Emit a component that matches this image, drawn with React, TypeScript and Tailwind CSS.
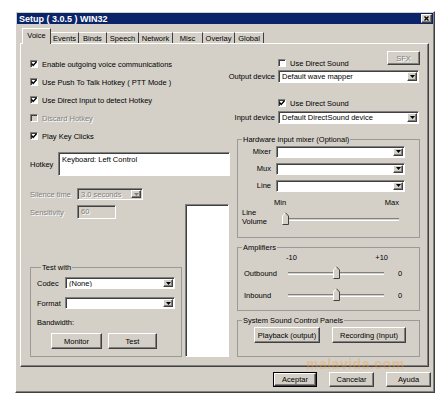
import type { ReactNode } from "react";

const raised =
  "border border-t-white border-l-white border-r-[#404040] border-b-[#404040] shadow-[inset_-1px_-1px_0_#808080]";
const sunken =
  "border border-t-[#808080] border-l-[#808080] border-r-white border-b-white shadow-[inset_1px_1px_0_#404040]";
const grayText = "text-[#808080] [text-shadow:1px_1px_0_#fff]";

function Check({ label, checked = false, disabled = false }: { label: string; checked?: boolean; disabled?: boolean }) {
  return (
    <div className="flex items-center gap-[4px] h-[10px]">
      <span
        className={`w-[8px] h-[8px] shrink-0 flex items-center justify-center ${sunken} ${
          disabled ? "bg-[#d4d0c8]" : "bg-white"
        }`}
      >
        {checked && (
          <svg width="6" height="6" viewBox="0 0 6 6">
            <path d="M0.5 2.5 L2.2 4.5 L5.5 0.8" stroke="#000" strokeWidth="1.4" fill="none" />
          </svg>
        )}
      </span>
      <span className={disabled ? grayText : ""}>{label}</span>
    </div>
  );
}

function Arrow({ disabled = false }: { disabled?: boolean }) {
  return (
    <span className={`w-[10px] shrink-0 bg-[#d4d0c8] flex items-center justify-center ${raised}`}>
      <svg width="5" height="3" viewBox="0 0 5 3">
        <path d="M0 0 H5 L2.5 3 Z" fill={disabled ? "#808080" : "#000"} />
      </svg>
    </span>
  );
}

function Combo({ w, value = "", disabled = false, h = "h-[12px]" }: { w: string; value?: string; disabled?: boolean; h?: string }) {
  return (
    <div className={`${w} ${h} ${sunken} flex items-stretch p-[1px] ${disabled ? "bg-[#d4d0c8]" : "bg-white"}`}>
      <span className={`flex-1 flex items-center px-[2px] whitespace-nowrap overflow-hidden ${disabled ? grayText : ""}`}>
        {value}
      </span>
      <Arrow disabled={disabled} />
    </div>
  );
}

function Btn({ children, w, h = "h-[15px]", def = false, disabled = false }: { children: ReactNode; w: string; h?: string; def?: boolean; disabled?: boolean }) {
  return (
    <div className={`${w} ${h} ${def ? "border border-black" : ""} shrink-0`}>
      <div className={`w-full h-full bg-[#d4d0c8] flex items-center justify-center whitespace-nowrap ${raised} ${disabled ? grayText : ""}`}>
        {children}
      </div>
    </div>
  );
}

function Slider({ w, thumb }: { w: string; thumb: string }) {
  return (
    <div className={`relative h-[14px] ${w}`}>
      <div className="absolute left-0 right-0 top-[6px] h-[3px] border-t border-t-[#808080] border-b border-b-white bg-[#d4d0c8]" />
      <svg className={`absolute top-0 ${thumb}`} width="7" height="13" viewBox="0 0 7 13">
        <path d="M0.5 12.5 V4 L3.5 0.7 L6.5 4 V12.5 Z" fill="#d4d0c8" />
        <path d="M0.5 12.5 V4 L3.5 0.7" stroke="#fff" fill="none" />
        <path d="M3.5 0.7 L6.5 4 V12.5 H0.5" stroke="#404040" fill="none" />
      </svg>
    </div>
  );
}

function Group({ title, className, children }: { title: string; className: string; children: ReactNode }) {
  return (
    <fieldset className={`border border-[#9a9a9a] ${className}`}>
      <legend className="ml-[4px] px-[1px] leading-[9px]">{title}</legend>
      {children}
    </fieldset>
  );
}

const tabs = [
  { label: "Voice", w: "w-[29px]" },
  { label: "Events", w: "w-[28px]" },
  { label: "Binds", w: "w-[28px]" },
  { label: "Speech", w: "w-[32px]" },
  { label: "Network", w: "w-[34px]" },
  { label: "Misc", w: "w-[30px]" },
  { label: "Overlay", w: "w-[32px]" },
  { label: "Global", w: "w-[29px]" },
];

export default function App() {
  return (
    <div className="w-[445px] h-[400px] bg-white pt-[11px] pl-[15px] font-['Liberation_Sans',Arial,sans-serif] text-[7.5px] text-black leading-[9px]">
      <div className={`relative w-[420px] h-[382px] bg-[#d4d0c8] p-[1px] ${raised}`}>
        {/* Title bar */}
        <div className="h-[11px] bg-[#0a246a] flex items-center pl-[2px] pr-[1px]">
          <span className="text-white font-bold text-[9px] leading-[10px]">Setup ( 3.0.5 ) WIN32</span>
          <div className={`ml-auto w-[11px] h-[9px] bg-[#d4d0c8] flex items-center justify-center ${raised}`}>
            <svg width="5" height="5" viewBox="0 0 5 5">
              <path d="M0.5 0.5 L4.5 4.5 M4.5 0.5 L0.5 4.5" stroke="#000" strokeWidth="1.3" />
            </svg>
          </div>
        </div>

        {/* Tabs */}
        <div className="mt-[4px] h-[15px] pl-[5px] flex items-end">
          {tabs.map((t, i) =>
            i === 0 ? (
              <div
                key={t.label}
                className={`relative z-10 -mb-[1px] h-[16px] ${t.w} bg-[#d4d0c8] border-t border-l border-t-white border-l-white border-r border-r-[#404040] flex items-center justify-center pb-[2px]`}
              >
                {t.label}
              </div>
            ) : (
              <div
                key={t.label}
                className={`h-[11px] ${t.w} border-t border-t-white border-r border-r-[#404040] flex items-center justify-center`}
              >
                {t.label}
              </div>
            )
          )}
        </div>

        {/* Panel */}
        <div className={`ml-[3px] w-[409px] h-[324px] flex ${raised}`}>
          {/* Left column */}
          <div className="w-[211px] flex flex-col pl-[9px] pt-[11px]">
            <div className="h-[18px] flex items-center">
              <Check label="Enable outgoing voice communications" checked />
            </div>
            <div className="h-[18px] flex items-center">
              <Check label="Use Push To Talk Hotkey ( PTT Mode )" checked />
            </div>
            <div className="h-[18px] flex items-center">
              <Check label="Use Direct Input to detect Hotkey" checked />
            </div>
            <div className="h-[18px] flex items-center">
              <Check label="Discard Hotkey" disabled />
            </div>
            <div className="h-[18px] flex items-center">
              <Check label="Play Key Clicks" checked />
            </div>

            <div className="mt-[7px] h-[24px] flex items-center">
              <span className="w-[28px]">Hotkey</span>
              <div className={`w-[172px] h-[24px] bg-white px-[3px] py-[2px] ${sunken}`}>Keyboard: Left Control</div>
            </div>

            <div className="mt-[12px] flex">
              <div className="w-[150px] flex flex-col">
                <div className="h-[12px] flex items-center">
                  <span className={`w-[47px] ${grayText}`}>Silence time</span>
                  <Combo w="w-[66px]" value="3.0 seconds" disabled />
                </div>
                <div className="mt-[5px] h-[14px] flex items-center">
                  <span className={`w-[47px] ${grayText}`}>Sensitivity</span>
                  <div className={`w-[39px] h-[14px] bg-[#d4d0c8] px-[3px] pt-[1px] ${sunken} ${grayText}`}>60</div>
                </div>

                <Group title="Test with" className="mt-[44px] h-[94px] px-[6px]">
                  <div className="mt-[5px] h-[12px] flex items-center">
                    <span className="w-[28px]">Codec</span>
                    <Combo w="w-[110px]" value="(None)" />
                  </div>
                  <div className="mt-[8px] h-[12px] flex items-center">
                    <span className="w-[28px]">Format</span>
                    <Combo w="w-[110px]" />
                  </div>
                  <div className="mt-[9px] h-[9px]">Bandwidth:</div>
                  <div className="mt-[6px] ml-[14px] flex gap-[6px]">
                    <Btn w="w-[51px]" h="h-[16px]">Monitor</Btn>
                    <Btn w="w-[49px]" h="h-[16px]">Test</Btn>
                  </div>
                </Group>
              </div>
              <div className={`ml-[5px] mt-[16px] w-[44px] h-[153px] bg-white ${sunken}`} />
            </div>
          </div>

          {/* Right column */}
          <div className="w-[196px] flex flex-col">
            <div className="pt-[7px] flex items-start">
              <div className="ml-[46px] mt-[7px]">
                <Check label="Use Direct Sound" />
              </div>
              <div className="ml-auto mr-[8px]">
                <Btn w="w-[33px]" h="h-[14px]" disabled>
                  SFX
                </Btn>
              </div>
            </div>
            <div className="mt-[2px] h-[13px] flex items-center">
              <span className="w-[43px] flex justify-end whitespace-nowrap">Output device</span>
              <span className="w-[3px]" />
              <Combo w="w-[141px]" h="h-[13px]" value="Default wave mapper" />
            </div>
            <div className="mt-[15px] ml-[46px]">
              <Check label="Use Direct Sound" checked />
            </div>
            <div className="mt-[3px] h-[13px] flex items-center">
              <span className="w-[43px] flex justify-end whitespace-nowrap">Input device</span>
              <span className="w-[3px]" />
              <Combo w="w-[141px]" h="h-[13px]" value="Default DirectSound device" />
            </div>

            <Group title="Hardware input mixer (Optional)" className="mt-[11px] ml-[5px] w-[183px] h-[103px]">
              <div className="mt-[2px] h-[11px] flex items-center">
                <span className="w-[33px] text-right">Mixer</span>
                <span className="w-[5px]" />
                <Combo w="w-[129px]" h="h-[12px]" />
              </div>
              <div className="mt-[6px] h-[11px] flex items-center">
                <span className="w-[33px] text-right">Mux</span>
                <span className="w-[5px]" />
                <Combo w="w-[129px]" h="h-[12px]" />
              </div>
              <div className="mt-[6px] h-[11px] flex items-center">
                <span className="w-[33px] text-right">Line</span>
                <span className="w-[5px]" />
                <Combo w="w-[129px]" h="h-[12px]" />
              </div>
              <div className="mt-[7px] h-[9px] flex pl-[36px] pr-[20px] justify-between">
                <span>Min</span>
                <span>Max</span>
              </div>
              <div className="mt-[1px] flex items-end pl-[4px]">
                <div className="w-[40px]">
                  Line
                  <br />
                  Volume
                </div>
                <Slider w="w-[117px]" thumb="left-0" />
              </div>
            </Group>

            <Group title="Amplifiers" className="mt-[5px] ml-[5px] w-[183px] h-[68px]">
              <div className="mt-[1px] h-[9px] flex ml-[48px] w-[102px] justify-between">
                <span>-10</span>
                <span>+10</span>
              </div>
              <div className="mt-[4px] h-[14px] flex items-center pl-[6px]">
                <span className="w-[44px]">Outbound</span>
                <Slider w="w-[96px]" thumb="left-[45px]" />
                <span className="ml-[14px]">0</span>
              </div>
              <div className="mt-[8px] h-[14px] flex items-center pl-[6px]">
                <span className="w-[44px]">Inbound</span>
                <Slider w="w-[96px]" thumb="left-[45px]" />
                <span className="ml-[14px]">0</span>
              </div>
            </Group>

            <Group title="System Sound Control Panels" className="mt-[5px] ml-[5px] w-[183px] h-[41px]">
              <div className="mt-[2px] ml-[16px] flex gap-[12px]">
                <Btn w="w-[66px]" h="h-[16px]">Playback (output)</Btn>
                <Btn w="w-[74px]" h="h-[16px]">Recording (Input)</Btn>
              </div>
            </Group>
          </div>
        </div>

        {/* Dialog buttons */}
        <div className="mt-[5px] pr-[2px] flex justify-end gap-[12px]">
          <Btn w="w-[44px]" def>
            Aceptar
          </Btn>
          <Btn w="w-[45px]">Cancelar</Btn>
          <Btn w="w-[45px]">Ayuda</Btn>
        </div>

        {/* Watermark */}
        <div className="absolute left-[290px] top-[345px] text-[14px] leading-[14px] font-bold text-[#f0a040] opacity-35 tracking-[0.5px] pointer-events-none">
          malavida.com
        </div>
      </div>
    </div>
  );
}
